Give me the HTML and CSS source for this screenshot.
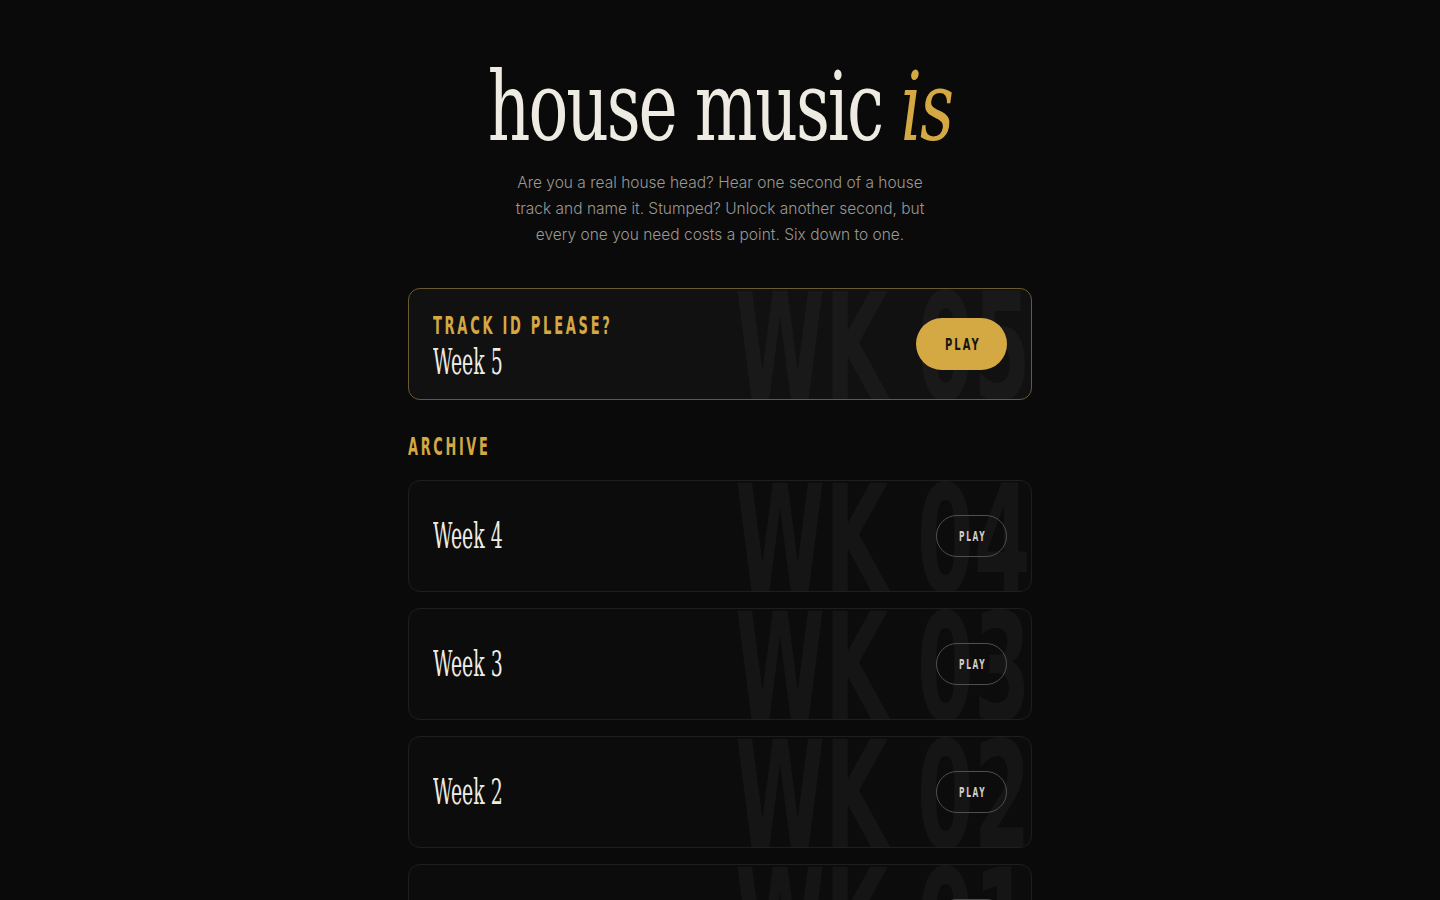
FILE: index.html
```html
<!DOCTYPE html>
<html lang="en">
<head>
<meta charset="utf-8">
<title>house music is</title>
<link rel="stylesheet" href="styles.css">
</head>
<body>
<main class="page">
  <header class="hero">
    <h1 class="title">house music <em>is</em></h1>
    <p class="intro">Are you a real house head? Hear one second of a house track and name it. Stumped? Unlock another second, but every one you need costs a point. Six down to one.</p>
  </header>

  <section class="card card-current">
    <span class="watermark">WK 05</span>
    <div class="card-text">
      <span class="eyebrow">Track ID please?</span>
      <span class="week">Week 5</span>
    </div>
    <button class="btn btn-solid"><span class="btn-label">Play</span></button>
  </section>

  <h2 class="section-label">Archive</h2>

  <ul class="archive">
    <li class="card">
      <span class="watermark">WK 04</span>
      <div class="card-text"><span class="week">Week 4</span></div>
      <button class="btn btn-ghost"><span class="btn-label">Play</span></button>
    </li>
    <li class="card">
      <span class="watermark">WK 03</span>
      <div class="card-text"><span class="week">Week 3</span></div>
      <button class="btn btn-ghost"><span class="btn-label">Play</span></button>
    </li>
    <li class="card">
      <span class="watermark">WK 02</span>
      <div class="card-text"><span class="week">Week 2</span></div>
      <button class="btn btn-ghost"><span class="btn-label">Play</span></button>
    </li>
    <li class="card">
      <span class="watermark">WK 01</span>
      <div class="card-text"><span class="week">Week 1</span></div>
      <button class="btn btn-ghost"><span class="btn-label">Play</span></button>
    </li>
  </ul>
</main>
</body>
</html>
```

FILE: styles.css
```css
* { box-sizing: border-box; }

html, body {
  margin: 0;
  background: #0a0a0a;
  color: #efece4;
}

body {
  font-family: "Inter", "Lato", sans-serif;
}

.page {
  width: 624px;
  margin: 0 auto;
  padding-top: 52px;
  padding-bottom: 80px;
}

.hero {
  display: flex;
  flex-direction: column;
  align-items: center;
  text-align: center;
}

/* Display serif, drawn narrow */
.title {
  margin: 0;
  font-family: "DejaVu Serif", "Liberation Serif", serif;
  font-weight: 400;
  font-size: 95px;
  line-height: 110px;
  letter-spacing: -3px;
  color: #eeebe3;
  white-space: nowrap;
  transform: scaleX(0.697);
  transform-origin: center;
}

.title em {
  color: #d4a843;
  font-style: italic;
}

.intro {
  width: 430px;
  margin: 8px 0 0;
  font-size: 15.5px;
  font-weight: 300;
  line-height: 26px;
  color: #9a9893;
}

.card {
  position: relative;
  overflow: hidden;
  height: 112px;
  display: flex;
  align-items: center;
  justify-content: space-between;
  padding: 0 24px;
  border: 1px solid #1e1e1e;
  border-radius: 12px;
  background: #0c0c0c;
}

.card-current {
  margin-top: 40px;
  border-color: #6a5a31;
  background: #111111;
}

/* Oversized week number behind each card */
.watermark {
  position: absolute;
  right: 0;
  top: calc(50% + 4px);
  transform: translateY(-50%) scaleX(0.545);
  transform-origin: right center;
  font-family: "DejaVu Sans", sans-serif;
  font-weight: 700;
  font-size: 150px;
  line-height: 1;
  color: #151515;
  white-space: nowrap;
  pointer-events: none;
}

.card-current .watermark { color: #191919; }

.card-text {
  position: relative;
  display: flex;
  flex-direction: column;
  width: 240px;
}

.card-current .card-text { padding-top: 6px; }

.eyebrow {
  display: block;
  font-family: "DejaVu Sans", sans-serif;
  font-weight: 700;
  font-size: 24px;
  line-height: 24px;
  letter-spacing: 5px;
  text-transform: uppercase;
  color: #d4a843;
  white-space: nowrap;
  margin-bottom: 6px;
  transform: scaleX(0.543);
  transform-origin: left center;
}

.week {
  display: block;
  font-family: "DejaVu Serif", "Liberation Serif", serif;
  font-size: 35px;
  line-height: 36px;
  color: #efece4;
  white-space: nowrap;
  transform: scaleX(0.54);
  transform-origin: left center;
}

.btn {
  position: relative;
  display: flex;
  align-items: center;
  justify-content: center;
  padding: 0;
  border-radius: 999px;
  font-family: "DejaVu Sans", sans-serif;
  font-weight: 700;
  text-transform: uppercase;
  cursor: pointer;
}

.btn-label {
  display: block;
  white-space: nowrap;
  transform-origin: center;
}

.btn-solid {
  width: 91px;
  height: 52px;
  border: 0;
  background: #d4a843;
  color: #151515;
  font-size: 16.5px;
}

.btn-solid .btn-label {
  letter-spacing: 3.5px;
  margin-right: -3.5px;
  transform: scaleX(0.6);
}

.btn-ghost {
  width: 71px;
  height: 42px;
  border: 1px solid #4f4f4f;
  background: transparent;
  color: #d2cdc3;
  font-size: 13.5px;
}

.btn-ghost .btn-label {
  letter-spacing: 3px;
  margin-right: -3px;
  transform: scaleX(0.55);
}

.section-label {
  margin: 35px 0 21px;
  font-family: "DejaVu Sans", sans-serif;
  font-weight: 700;
  font-size: 24px;
  line-height: 24px;
  letter-spacing: 5px;
  text-transform: uppercase;
  color: #d4a843;
  transform: scaleX(0.537);
  transform-origin: left center;
}

.archive {
  list-style: none;
  margin: 0;
  padding: 0;
  display: flex;
  flex-direction: column;
  gap: 16px;
}
```
